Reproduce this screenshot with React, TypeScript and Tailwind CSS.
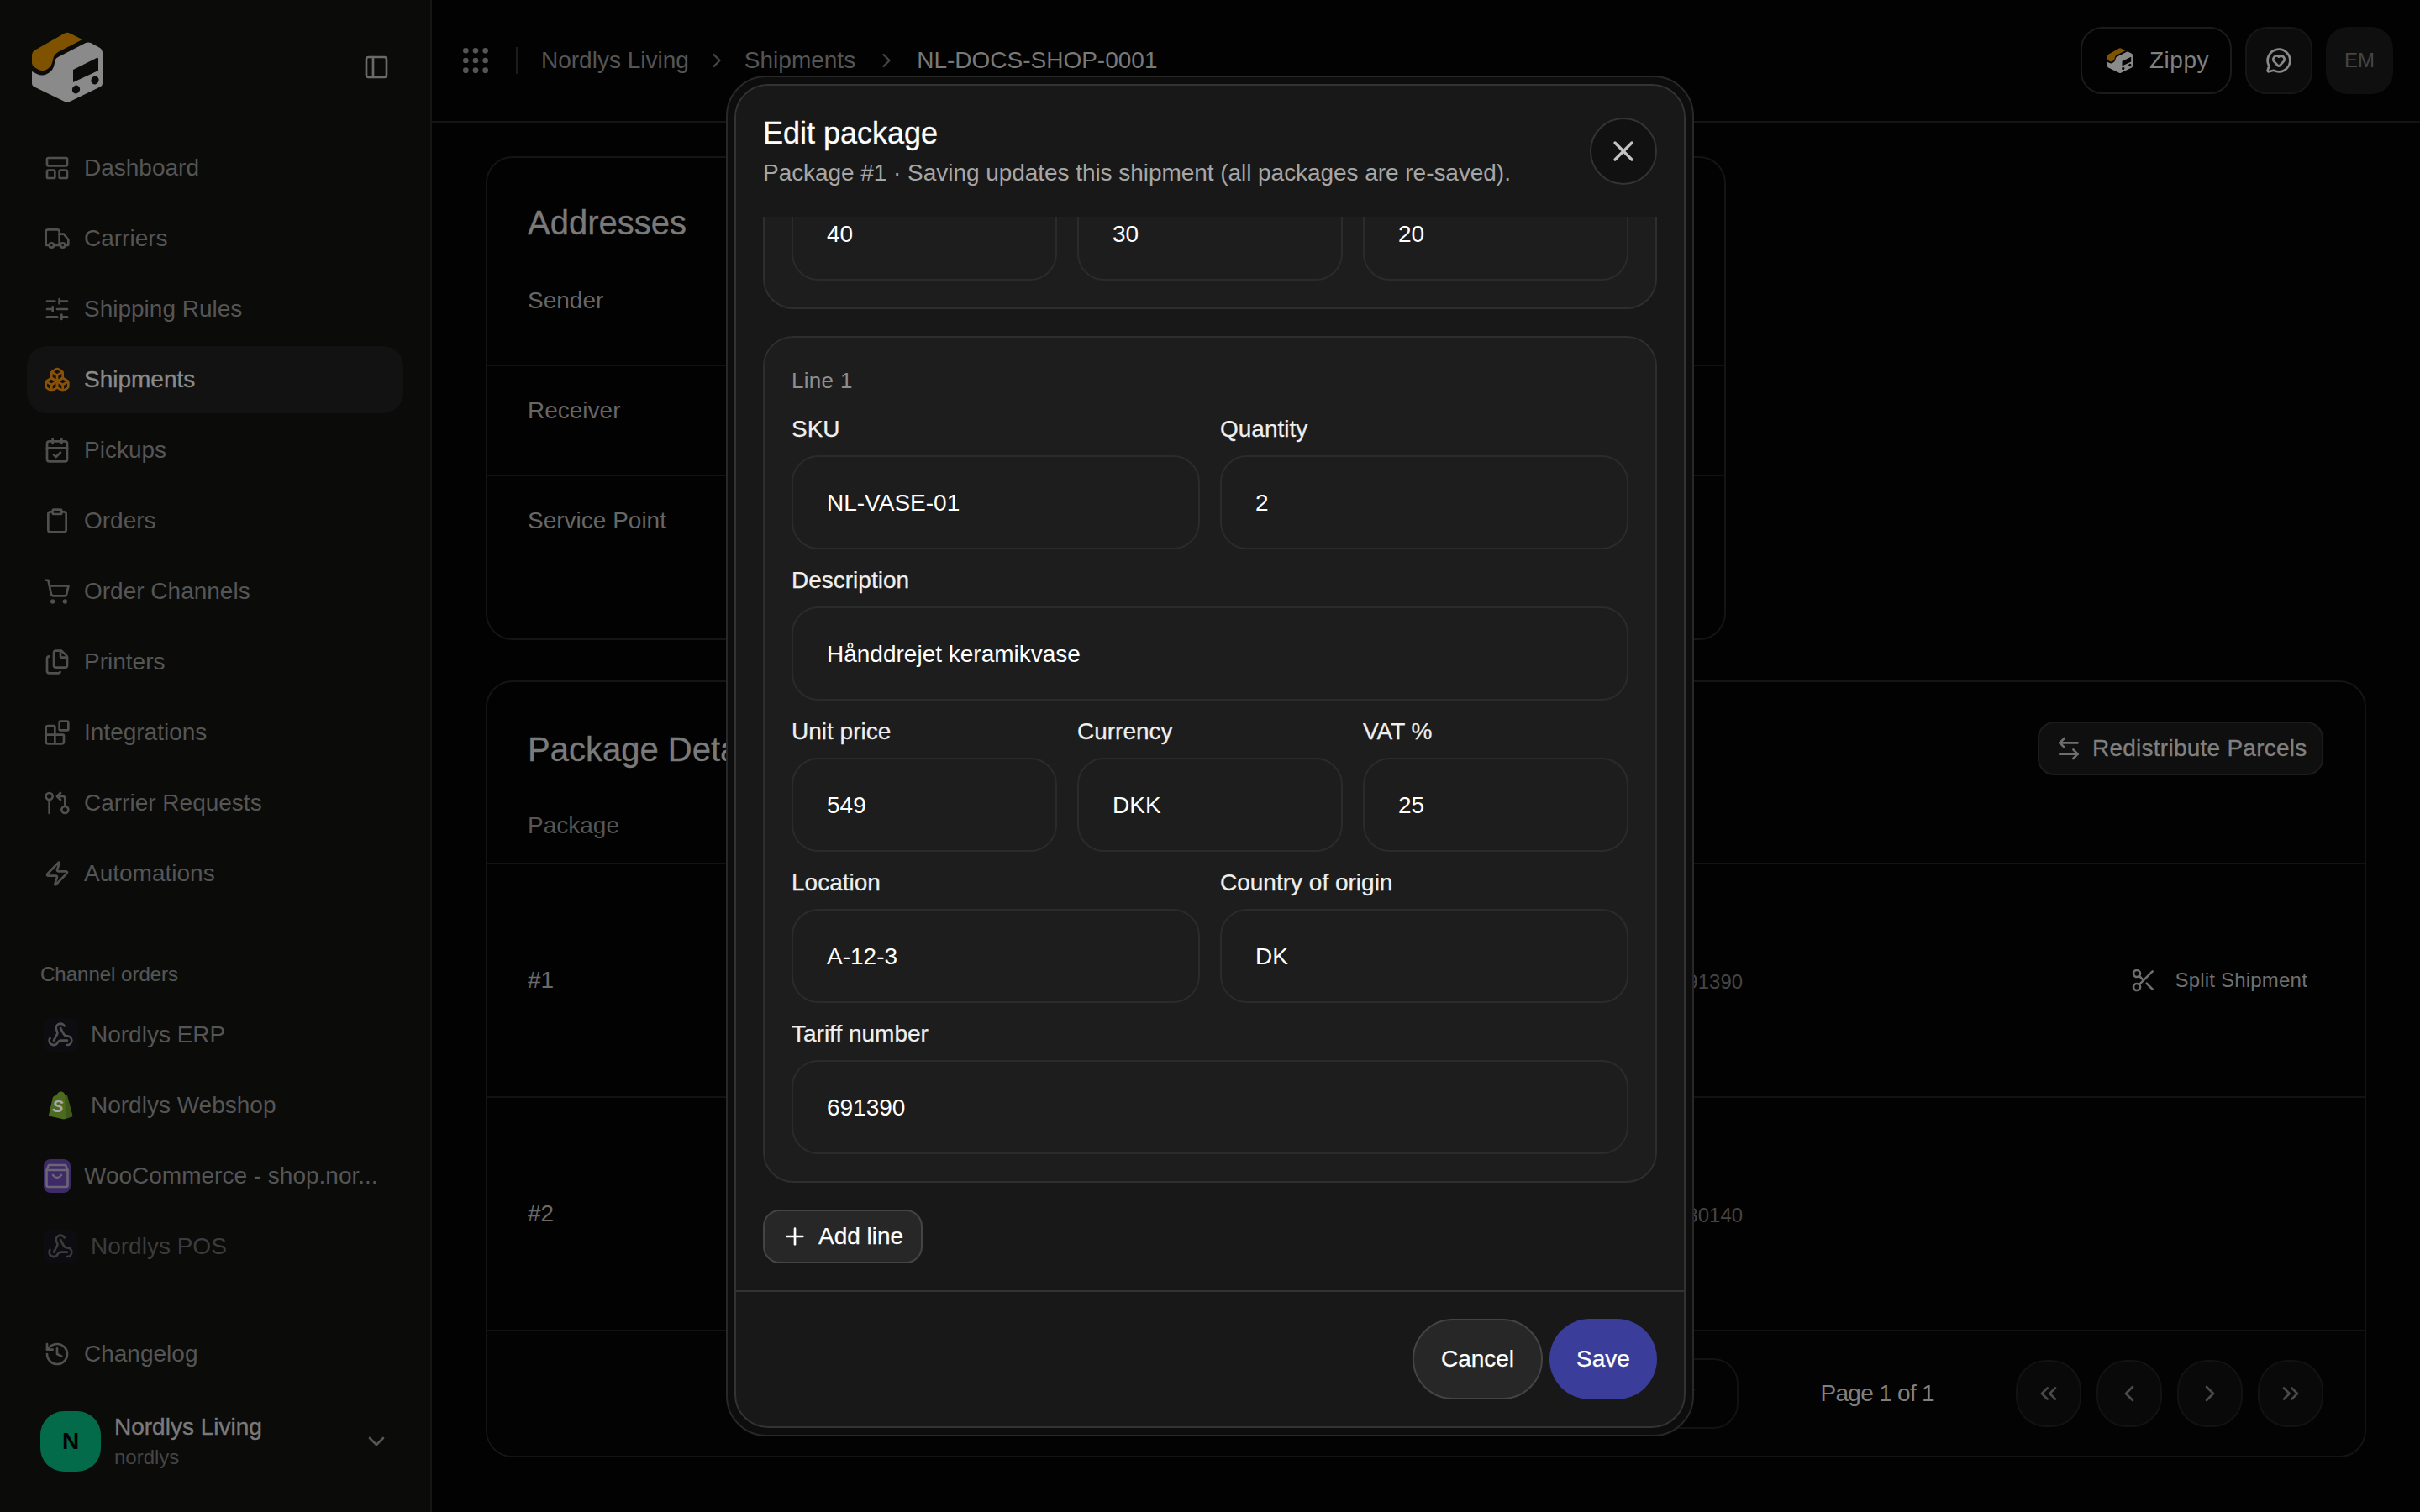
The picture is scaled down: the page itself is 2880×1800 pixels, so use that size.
import React from "react";
import {
  LayoutPanelTop, Truck, SlidersHorizontal, Boxes, CalendarCheck, Clipboard, ShoppingCart, Files, Blocks,
  GitPullRequestArrow, Zap, History, Webhook, PanelLeft, ChevronDown, ChevronRight, ChevronLeft, ChevronsLeft, ChevronsRight,
  Grip, MessageCircleHeart, ArrowLeftRight, Scissors, X, Plus,
} from "lucide-react";

function Logo({ size, orange = "#7f5200", gray = "#8a8a8a", dark = "#0b0b0a" }: { size: number; orange?: string; gray?: string; dark?: string }) {
  return (
    <svg width={size} height={size} viewBox="0 0 84 84" className="shrink-0">
      <path
        d="M3 22 L39 1.5 Q42 0 45 1.5 L60 9 L31 24 Q26 27 25 33 Q24 40 20 43 Q15 48 8 45 L3 42 Q0 40 0 37 V27 Q0 24 3 22 Z"
        fill={orange}
      />
      <path
        d="M0 47 L6 50 Q12 53 18 50 Q26 46 27 37 Q27 32 31 30 L64 13 Q67 12 70 13 L81 19 Q84 21 84 24 V61 Q84 64 81 65.5 L45 83 Q42 84.5 39 83 L3 65.5 Q0 64 0 61 Z"
        fill={gray}
      />
      <path d="M49 45 L77 31 Q79 30 79 32 V46 L49 60 Z" fill={dark} />
      <ellipse cx="52.5" cy="68.5" rx="4.5" ry="5" transform="rotate(30 52.5 68.5)" fill={dark} />
      <ellipse cx="75" cy="57.5" rx="4.5" ry="5" transform="rotate(30 75 57.5)" fill={dark} />
    </svg>
  );
}

const navItems = [
  { label: "Dashboard", Icon: LayoutPanelTop },
  { label: "Carriers", Icon: Truck },
  { label: "Shipping Rules", Icon: SlidersHorizontal },
  { label: "Shipments", Icon: Boxes, active: true },
  { label: "Pickups", Icon: CalendarCheck },
  { label: "Orders", Icon: Clipboard },
  { label: "Order Channels", Icon: ShoppingCart },
  { label: "Printers", Icon: Files },
  { label: "Integrations", Icon: Blocks },
  { label: "Carrier Requests", Icon: GitPullRequestArrow },
  { label: "Automations", Icon: Zap },
];

function NavItem({ label, Icon, active }: { label: string; Icon: any; active?: boolean }) {
  return (
    <div className={`flex h-[80px] items-center gap-[16px] rounded-[24px] pl-[20px] ${active ? "bg-[#121212] text-[#8a8a8a] [-webkit-text-stroke:0.35px_#8a8a8a]" : "text-[#555555]"}`}>
      <Icon size={32} strokeWidth={2} className={`shrink-0 ${active ? "text-[#8a5208]" : "text-[#505050]"}`} />
      <span className="text-[28px] leading-[40px]">{label}</span>
    </div>
  );
}

function WebhookRow({ label, dim }: { label: string; dim?: boolean }) {
  return (
    <div className="flex h-[80px] items-center gap-[16px] pl-[20px]">
      <div className={`flex h-[40px] w-[40px] items-center justify-center rounded-[8px] bg-[#0d0d11] ${dim ? "text-[#3c3c3c]" : "text-[#505050]"}`}>
        <Webhook size={32} strokeWidth={2} />
      </div>
      <span className={`text-[28px] leading-[40px] ${dim ? "text-[#3c3c3c]" : "text-[#555555]"}`}>{label}</span>
    </div>
  );
}

function Sidebar() {
  return (
    <aside className="flex h-full w-[514px] shrink-0 flex-col border-r-2 border-r-[#161616] bg-[#0b0b0a]">
      <div className="flex h-[160px] shrink-0 items-center justify-between pl-[38px] pr-[48px]">
        <Logo size={84} />
        <PanelLeft size={32} strokeWidth={2} className="text-[#6a6a6a]" />
      </div>
      <nav className="flex flex-col gap-[4px] px-[32px]">
        {navItems.map((n) => (
          <NavItem key={n.label} label={n.label} Icon={n.Icon} active={n.active} />
        ))}
      </nav>
      <div className="mt-[64px] pl-[48px] text-[24px] leading-[32px] text-[#555555] [-webkit-text-stroke:0.2px_#555555]">Channel orders</div>
      <div className="mt-[16px] flex flex-col gap-[4px] px-[32px]">
        <WebhookRow label="Nordlys ERP" />
        <div className="flex h-[80px] items-center gap-[16px] pl-[20px]">
          <div className="flex h-[40px] w-[40px] items-center justify-center">
            <svg width="30" height="34" viewBox="0 0 30 34">
              <path d="M1 28.5 L6 7 Q7 5.5 10 5 Q12 0.5 15.5 0.5 Q19 0.5 20.5 4.5 L23 5.5 L29.5 30 L19 33.5 L1 29.5 Z" fill="#4d6b1f" />
              <path d="M20.5 4.5 L23 5.5 L29.5 30 L21 33 Z" fill="#3f5a18" />
              <text x="12" y="25" fontFamily="'Liberation Sans', sans-serif" fontSize="20" fontWeight="700" fontStyle="italic" textAnchor="middle" fill="#a9a9a9">S</text>
            </svg>
          </div>
          <span className="text-[28px] leading-[40px] text-[#555555]">Nordlys Webshop</span>
        </div>
        <div className="flex h-[80px] items-center gap-[16px] pl-[20px]">
          <div className="flex h-[40px] w-[32px] shrink-0 items-center justify-center rounded-[8px] bg-[#3e2a66]">
            <svg width="28" height="30" viewBox="0 0 28 30" fill="none" stroke="#6b6675" strokeWidth="2.6" strokeLinecap="round" strokeLinejoin="round">
              <path d="M4 2 H24 L26.5 8 V26 Q26.5 28 24.5 28 H3.5 Q1.5 28 1.5 26 V8 Z" />
              <path d="M1.5 8 H26.5" />
              <path d="M9 14 Q14 20 19 14" />
            </svg>
          </div>
          <span className="whitespace-nowrap text-[28px] leading-[40px] text-[#555555]">WooCommerce - shop.nor...</span>
        </div>
        <WebhookRow label="Nordlys POS" dim />
      </div>
      <div className="mt-auto px-[32px]">
        <NavItem label="Changelog" Icon={History} />
      </div>
      <div className="mb-[48px] mt-[28px] flex h-[72px] items-center pl-[48px] pr-[48px]">
        <div className="flex h-[72px] w-[72px] shrink-0 items-center justify-center rounded-[28px] bg-[#036b4a] text-[28px] font-bold text-[#020202]">N</div>
        <div className="ml-[16px] flex flex-col">
          <span className="text-[28px] leading-[38px] text-[#7a7a7a] [-webkit-text-stroke:0.4px_#7a7a7a]">Nordlys Living</span>
          <span className="text-[24px] leading-[34px] text-[#454545]">nordlys</span>
        </div>
        <ChevronDown size={32} strokeWidth={2} className="ml-auto text-[#555555]" />
      </div>
    </aside>
  );
}

function TopBar() {
  return (
    <header className="flex h-[146px] shrink-0 items-center border-b-2 border-b-[#141414] pl-[32px] pr-[32px]">
      <Grip size={40} strokeWidth={2} className="text-[#555555]" />
      <div className="ml-[28px] h-[32px] w-[2px] bg-[#1c1c1c]" />
      <div className="ml-[28px] flex items-center gap-[19px] text-[28px] leading-[40px] text-[#555555]">
        <span>Nordlys Living</span>
        <ChevronRight size={28} strokeWidth={2} className="text-[#454545]" />
        <span>Shipments</span>
        <ChevronRight size={28} strokeWidth={2} className="ml-[4px] mr-[3px] text-[#454545]" />
        <span className="text-[#787878]">NL-DOCS-SHOP-0001</span>
      </div>
      <div className="ml-auto flex items-center gap-[16px]">
        <div className="flex h-[80px] w-[180px] items-center gap-[20px] rounded-[26px] border-2 border-[#1b1b1b] pl-[30px]">
          <Logo size={30} dark="#020202" />
          <span className="text-[28px] leading-[40px] tracking-[0.5px] text-[#808080]">Zippy</span>
        </div>
        <div className="flex h-[80px] w-[80px] items-center justify-center rounded-[26px] border-2 border-[#161616] bg-[#0c0c0c]">
          <MessageCircleHeart size={32} strokeWidth={2} className="text-[#8a8a8a]" />
        </div>
        <div className="flex h-[80px] w-[80px] items-center justify-center rounded-[26px] bg-[#0f0f0f] text-[24px] text-[#454545]">EM</div>
      </div>
    </header>
  );
}

function AddressRow({ label, last }: { label: string; last?: boolean }) {
  return (
    <div className={`pl-[48px] pt-[33px] ${last ? "h-[193px]" : "h-[131px] border-b-2 border-b-[#121212]"}`}>
      <div className="text-[28px] leading-[40px] text-[#666666]">{label}</div>
    </div>
  );
}

function PageBtn({ Icon }: { Icon: any }) {
  return (
    <div className="flex h-[80px] w-[78px] items-center justify-center rounded-[36px] border-2 border-[#121212] bg-[#090909]">
      <Icon size={32} strokeWidth={2} className="text-[#4a4a4a]" />
    </div>
  );
}

function Background() {
  return (
    <main className="flex min-w-0 flex-1 flex-col bg-[#020202]">
      <TopBar />
      <div className="flex flex-col gap-[48px] pl-[64px] pr-[64px] pt-[40px]">
        <section className="w-[1476px] rounded-[32px] border-2 border-[#141414]">
          <h2 className="pl-[48px] pt-[49px] text-[40px] leading-[56px] text-[#7a7a7a] [-webkit-text-stroke:0.3px_#7a7a7a]">Addresses</h2>
          <div className="pt-[12px]">
            <AddressRow label="Sender" />
            <AddressRow label="Receiver" />
            <AddressRow label="Service Point" last />
          </div>
        </section>
        <section className="rounded-[32px] border-2 border-[#141414]">
          <div className="flex h-[126px] items-start justify-between pl-[48px] pr-[49px] pt-[47px]">
            <h2 className="text-[40px] leading-[66px] text-[#7a7a7a] [-webkit-text-stroke:0.3px_#7a7a7a]">Package Details</h2>
            <div className="flex h-[64px] w-[340px] items-center gap-[12px] rounded-[20px] border-2 border-[#1c1c1c] bg-[#0f0f0f] pl-[19px]">
              <ArrowLeftRight size={32} strokeWidth={2} className="text-[#6e6e6e]" />
              <span className="whitespace-nowrap text-[28px] leading-[40px] tracking-[0.25px] text-[#808080] [-webkit-text-stroke:0.3px_#808080]">Redistribute Parcels</span>
            </div>
          </div>
          <div className="flex h-[91px] items-center border-b-2 border-b-[#121212] pl-[48px] pr-[49px]">
            <span className="text-[28px] leading-[40px] text-[#555555]">Package</span>
          </div>
          <div className="flex h-[278px] items-center border-b-2 border-b-[#121212] pl-[48px] pr-[49px]">
            <span className="w-[1366px] text-[28px] leading-[40px] text-[#6a6a6a]">#1</span>
            <span className="mt-[4px] text-[24px] leading-[32px] text-[#444444]">691390</span>
            <div className="ml-auto mr-[19px] flex items-center gap-[21px]">
              <Scissors size={32} strokeWidth={2} className="text-[#6e6e6e]" />
              <span className="text-[24px] leading-[32px] tracking-[0.2px] text-[#707070]">Split Shipment</span>
            </div>
          </div>
          <div className="flex h-[278px] items-center border-b-2 border-b-[#121212] pl-[48px] pr-[49px]">
            <span className="w-[1366px] text-[28px] leading-[40px] text-[#6a6a6a]">#2</span>
            <span className="mt-[4px] text-[24px] leading-[32px] text-[#444444]">630140</span>
          </div>
          <div className="flex h-[148px] items-center justify-end gap-[97px] rounded-b-[32px] bg-[#030303] px-[49px]">
            <div className="flex h-[84px] w-[170px] items-center justify-end rounded-[30px] border-2 border-[#121212] pr-[44px]">
              <ChevronDown size={32} strokeWidth={2} className="text-[#4a4a4a]" />
            </div>
            <span className="text-[28px] leading-[40px] tracking-[-0.7px] text-[#808080]">Page 1 of 1</span>
            <div className="flex gap-[18px]">
              <PageBtn Icon={ChevronsLeft} />
              <PageBtn Icon={ChevronLeft} />
              <PageBtn Icon={ChevronRight} />
              <PageBtn Icon={ChevronsRight} />
            </div>
          </div>
        </section>
      </div>
    </main>
  );
}

function ValueBox({ value }: { value?: string }) {
  return (
    <div className="flex h-[112px] items-center rounded-[32px] border-2 border-[#2b2b2b] pl-[40px] pt-[2px] text-[28px] leading-[40px] text-white">{value}</div>
  );
}

function Field({ label, value }: { label: string; value: string }) {
  return (
    <div className="flex min-w-0 flex-col gap-[10px]">
      <label className="text-[28px] leading-[42px] text-[#efefef] [-webkit-text-stroke:0.25px_#efefef]">{label}</label>
      <ValueBox value={value} />
    </div>
  );
}

function Modal() {
  return (
    <div className="absolute left-[864px] top-[90px] h-[1620px] w-[1152px] rounded-[48px] border-2 border-[#282828] bg-[#0d0d0d] p-[8px]">
      <div className="flex h-full flex-col overflow-hidden rounded-[40px] border-2 border-[#333333] bg-[#181818]">
        <div className="relative z-10 flex h-[156px] shrink-0 items-center justify-between bg-[#181818] pl-[32px] pr-[32px]">
          <div>
            <h3 className="text-[36px] leading-[48px] text-white [-webkit-text-stroke:0.3px_#ffffff]">Edit package</h3>
            <p className="mt-[3px] text-[28px] leading-[40px] tracking-[-0.05px] text-[#a6a6a6]">Package #1 · Saving updates this shipment (all packages are re-saved).</p>
          </div>
          <div className="flex h-[80px] w-[80px] items-center justify-center rounded-full border-2 border-[#333333] bg-[#111111]">
            <X size={40} strokeWidth={2} className="text-[#c4c4c4]" />
          </div>
        </div>
        <div className="flex min-h-0 flex-1 flex-col justify-end gap-[32px] overflow-hidden pb-[32px] pl-[32px] pr-[32px]">
          <div className="shrink-0 rounded-[36px] border-2 border-[#2e2e2e] bg-[#1d1d1d] p-[32px] pt-[200px]">
            <div className="grid grid-cols-3 gap-[24px]">
              <ValueBox value="40" />
              <ValueBox value="30" />
              <ValueBox value="20" />
            </div>
          </div>
          <div className="flex shrink-0 flex-col rounded-[36px] border-2 border-[#2e2e2e] bg-[#1d1d1d] p-[32px]">
            <div className="mb-[18px] text-[26px] leading-[38px] tracking-[0.3px] text-[#8e8e8e]">Line 1</div>
            <div className="flex flex-col gap-[16px]">
              <div className="grid grid-cols-2 gap-[24px]">
                <Field label="SKU" value="NL-VASE-01" />
                <Field label="Quantity" value="2" />
              </div>
              <Field label="Description" value="Hånddrejet keramikvase" />
              <div className="grid grid-cols-3 gap-[24px]">
                <Field label="Unit price" value="549" />
                <Field label="Currency" value="DKK" />
                <Field label="VAT %" value="25" />
              </div>
              <div className="grid grid-cols-2 gap-[24px]">
                <Field label="Location" value="A-12-3" />
                <Field label="Country of origin" value="DK" />
              </div>
              <Field label="Tariff number" value="691390" />
            </div>
          </div>
          <div className="flex h-[64px] w-[190px] shrink-0 items-center gap-[12px] rounded-[20px] border-2 border-[#444444] bg-[#272727] pl-[20px] text-[28px] leading-[40px] text-white">
            <Plus size={32} strokeWidth={2} />
            <span className="[-webkit-text-stroke:0.25px_#ffffff]">Add line</span>
          </div>
        </div>
        <div className="flex h-[162px] shrink-0 items-center justify-end gap-[8px] border-t-2 border-t-[#333333] pr-[32px]">
          <div className="flex h-[96px] w-[155px] items-center justify-center rounded-[48px] border-2 border-[#444444] bg-[#272727] text-[28px] leading-[40px] text-white [-webkit-text-stroke:0.25px_#ffffff]">Cancel</div>
          <div className="flex h-[96px] w-[128px] items-center justify-center rounded-[48px] bg-[#3a3e9a] text-[28px] leading-[40px] text-white [-webkit-text-stroke:0.25px_#ffffff]">Save</div>
        </div>
      </div>
    </div>
  );
}

export default function App() {
  return (
    <div className="relative flex h-[1800px] w-[2880px] overflow-hidden bg-[#020202] font-['Liberation_Sans',Arial,sans-serif]">
      <Sidebar />
      <Background />
      <Modal />
    </div>
  );
}
